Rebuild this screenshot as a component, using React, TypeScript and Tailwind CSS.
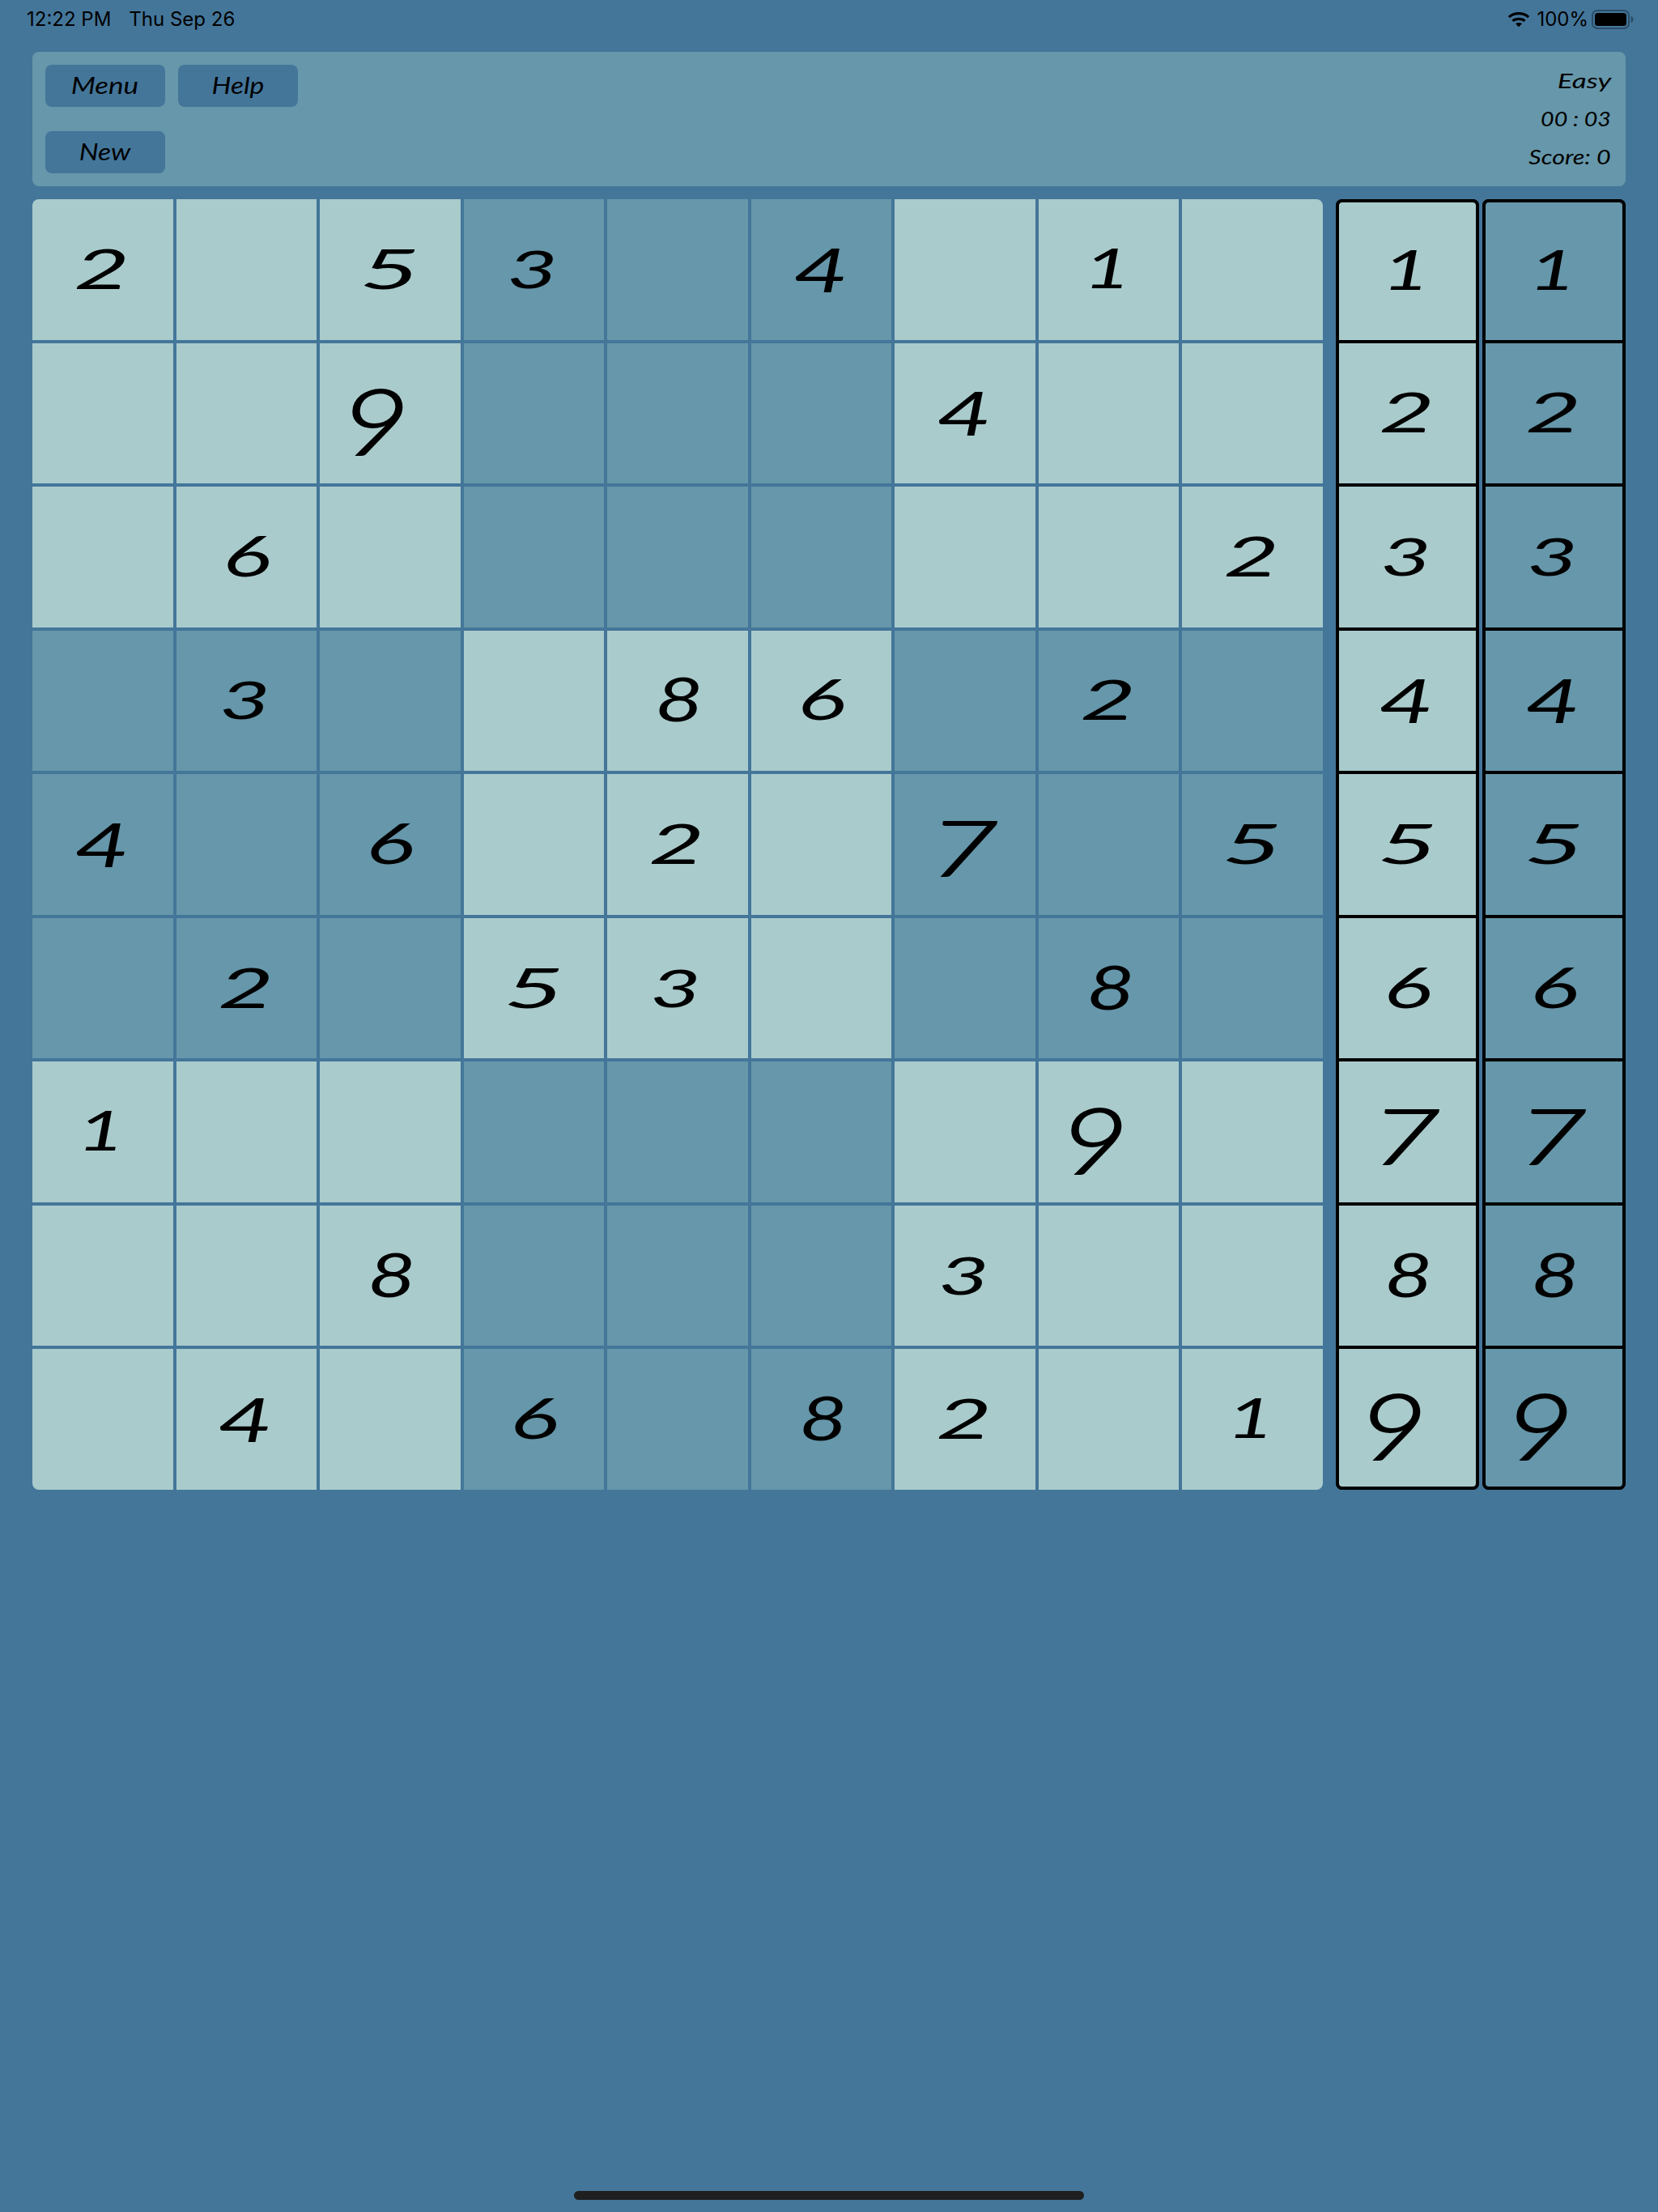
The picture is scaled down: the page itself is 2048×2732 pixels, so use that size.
import React from "react";

const puzzle = [
  "2.53.4.1.",
  "..9...4..",
  ".6......2",
  ".3..86.2.",
  "4.6.2.7.5",
  ".2.53..8.",
  "1......9.",
  "..8...3..",
  ".4.6.82.1",
];

const hand = "font-['Lato',sans-serif] italic";

const digitStyle: Record<string, string> = {
  "1": "text-[68px] scale-x-[1.5] -translate-x-[2px] -translate-y-[3px]",
  "2": "text-[68px] scale-x-[1.75] -translate-x-[1px] -translate-y-[2px]",
  "3": "text-[64px] scale-x-[1.7] -translate-x-[2px] -translate-y-[1px]",
  "4": "text-[76px] scale-x-[1.55] -translate-x-[1px] -translate-y-[1px]",
  "5": "text-[68px] scale-x-[1.9] -translate-y-[2px]",
  "6": "text-[70px] scale-x-[1.6] -translate-y-[3px]",
  "7": "text-[95px] font-light [-webkit-text-stroke:2px_black] scale-x-[1.55] -translate-x-[2px] translate-y-[3px]",
  "8": "text-[76px] scale-x-[1.35] translate-x-[2px] -translate-y-[3px]",
  "9": "text-[112px] font-light [-webkit-text-stroke:2px_black] scale-x-[1.3] -translate-x-[18px] translate-y-[9px]",
};

function Digit({ v }: { v: string }) {
  return <span className={`${hand} inline-block leading-none text-black ${digitStyle[v]}`}>{v}</span>;
}

function Cell({ v, dark }: { v: string; dark: boolean }) {
  return (
    <div className={`flex items-center justify-center ${dark ? "bg-[#6697aa]" : "bg-[#aacbcc]"}`}>
      {v !== "." && <Digit v={v} />}
    </div>
  );
}

function Picker({ dark }: { dark: boolean }) {
  return (
    <div className="grid w-[177px] grid-rows-9 gap-1 rounded-lg bg-black">
      {[1, 2, 3, 4, 5, 6, 7, 8, 9].map((n) => (
        <div
          key={n}
          className={`flex items-center justify-center border-x-4 border-black first:rounded-t-lg first:border-t-4 last:rounded-b-lg last:border-b-4 ${dark ? "bg-[#6697aa]" : "bg-[#aacbcc]"}`}
        >
          <Digit v={String(n)} />
        </div>
      ))}
    </div>
  );
}

export default function App() {
  return (
    <div className="relative flex h-[2732px] w-[2048px] flex-col bg-[#44769a] px-10 text-black">
      <div className="-mx-10 flex h-16 items-start justify-between pl-[33px] pr-[30px] pt-2 font-['Inter',sans-serif] text-[24px] leading-8 text-black">
        <div className="flex gap-[22px]">
          <span>12:22 PM</span>
          <span>Thu Sep 26</span>
        </div>
        <div className="flex items-center gap-[8px]">
          <svg width="28" height="22" viewBox="0 0 30 22" fill="none" stroke="black" strokeWidth="3.4">
            <path d="M2 8 C9 1.5 21 1.5 28 8" />
            <path d="M7 13 C11 9.5 19 9.5 23 13" />
            <path d="M15 21 L10.8 16.6 C13 15 17 15 19.2 16.6 Z" fill="black" stroke="none" />
          </svg>
          <span className="-mr-[4px]">100%</span>
          <svg width="52" height="24" viewBox="0 0 52 24">
            <rect x="1" y="1" width="45" height="22" rx="6" fill="none" stroke="#2b4d66" strokeWidth="2" />
            <rect x="4" y="4" width="39" height="16" rx="3.5" fill="black" />
            <path d="M48.5 8 C50.5 8.5 51.5 10 51.5 12 C51.5 14 50.5 15.5 48.5 16 Z" fill="#2b4d66" />
          </svg>
        </div>
      </div>

      <div className="flex h-[166px] justify-between rounded-lg bg-[#6697aa] p-4">
        <div className={`${hand} grid grid-cols-[148px_148px] grid-rows-[52px_52px] gap-x-4 gap-y-[30px] text-[28px]`}>
          <button className="flex items-center justify-center rounded-lg bg-[#44769a]">
            <span className="inline-block -translate-x-[1px] -translate-y-[1px] scale-x-[1.25]">Menu</span>
          </button>
          <button className="flex items-center justify-center rounded-lg bg-[#44769a]">
            <span className="inline-block -translate-y-[1px] scale-x-[1.2]">Help</span>
          </button>
          <button className="flex items-center justify-center rounded-lg bg-[#44769a]">
            <span className="inline-block -translate-y-[1px] scale-x-[1.2]">New</span>
          </button>
        </div>
        <div className={`${hand} flex flex-col items-end gap-[15px] pr-[2px] pt-[3px] text-[26px] leading-8`}>
          <span className="inline-block origin-right scale-x-[1.35]">Easy</span>
          <span className="inline-block origin-right scale-x-[1.1]">00 : 03</span>
          <span className="inline-block origin-right scale-x-[1.17]">Score: 0</span>
        </div>
      </div>

      <div className="mt-4 flex h-[1594px] gap-4">
        <div className="grid w-[1594px] grid-cols-9 grid-rows-9 gap-1 overflow-hidden rounded-lg">
          {puzzle.map((row, r) =>
            row.split("").map((v, c) => (
              <Cell key={`${r}-${c}`} v={v} dark={(Math.floor(r / 3) + Math.floor(c / 3)) % 2 === 1} />
            )),
          )}
        </div>
        <div className="flex gap-1">
          <Picker dark={false} />
          <Picker dark={true} />
        </div>
      </div>

      <div className="absolute left-[709px] top-[2706px] h-[11px] w-[630px] rounded-full bg-[#1f1f1f]" />
    </div>
  );
}
